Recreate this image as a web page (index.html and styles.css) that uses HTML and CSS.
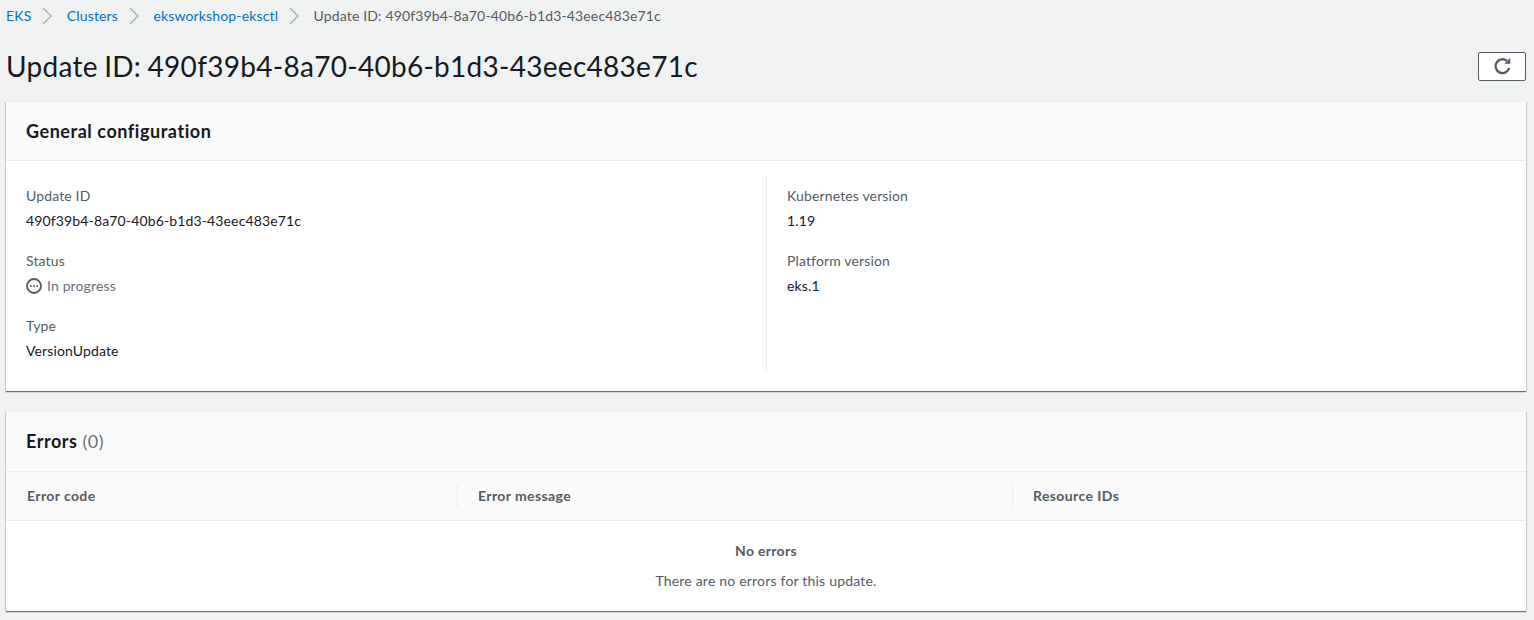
FILE: index.html
```html
<!DOCTYPE html>
<html lang="en">
<head>
<meta charset="utf-8">
<title>Update ID</title>
<link rel="stylesheet" href="styles.css">
</head>
<body>
<nav class="crumbs">
  <a href="#">EKS</a>
  <svg class="sep" width="10" height="18" viewBox="0 0 10 18"><path d="M1 1l8 8-8 8"/></svg>
  <a href="#">Clusters</a>
  <svg class="sep" width="10" height="18" viewBox="0 0 10 18"><path d="M1 1l8 8-8 8"/></svg>
  <a href="#">eksworkshop-eksctl</a>
  <svg class="sep" width="10" height="18" viewBox="0 0 10 18"><path d="M1 1l8 8-8 8"/></svg>
  <span class="current">Update ID: 490f39b4-8a70-40b6-b1d3-43eec483e71c</span>
</nav>
<header class="page-head">
  <h1>Update ID: 490f39b4-8a70-40b6-b1d3-43eec483e71c</h1>
  <button class="refresh" aria-label="Refresh">
    <svg width="19" height="19" viewBox="0 0 16 16"><path class="ring" d="M13.6 9.2A5.8 5.8 0 1 1 11.6 3.2"/><path class="head" d="M9.6 5.6h4.9V.7z"/></svg>
  </button>
</header>
<section class="card">
  <h2 class="card-title">General configuration</h2>
  <div class="columns">
    <div class="col">
      <div class="field"><div class="label">Update ID</div><div class="value">490f39b4-8a70-40b6-b1d3-43eec483e71c</div></div>
      <div class="field"><div class="label">Status</div><div class="value status">
        <svg width="16" height="16" viewBox="0 0 16 16"><circle class="ring" cx="8" cy="8" r="7"/><circle class="dot" cx="4.8" cy="8" r="1"/><circle class="dot" cx="8" cy="8" r="1"/><circle class="dot" cx="11.2" cy="8" r="1"/></svg>
        In progress</div></div>
      <div class="field"><div class="label">Type</div><div class="value">VersionUpdate</div></div>
    </div>
    <div class="col col-right">
      <div class="field"><div class="label">Kubernetes version</div><div class="value">1.19</div></div>
      <div class="field"><div class="label">Platform version</div><div class="value">eks.1</div></div>
    </div>
  </div>
</section>
<section class="card errors">
  <h2 class="card-title">Errors <span class="count">(0)</span></h2>
  <div class="thead">
    <div class="th th-code">Error code</div>
    <div class="th th-msg">Error message</div>
    <div class="th th-res">Resource IDs</div>
  </div>
  <div class="empty">
    <div class="empty-title">No errors</div>
    <div class="empty-text">There are no errors for this update.</div>
  </div>
</section>
</body>
</html>
```
FILE: styles.css
```css
* { box-sizing: border-box; }
html, body { margin: 0; height: 620px; overflow: hidden; }
body {
  background: #f0f2f2;
  padding: 0 8px 0 6px;
  font-family: "Lato", sans-serif;
  font-size: 14px;
  line-height: 20px;
  letter-spacing: .14px;
  color: #16191f;
}
.crumbs { display: flex; align-items: center; height: 32px; font-size: 14px; letter-spacing: .15px; }
.crumbs a { color: #0073bb; text-decoration: none; }
.sep { margin: 0 14.4px 0 11px; fill: none; stroke: #aab7b8; stroke-width: 1.6; }
.current { color: #545b64; }
.page-head { display: flex; justify-content: space-between; align-items: center; height: 69px; }
h1 { margin: 0 0 2px; font-size: 28px; line-height: 34px; font-weight: 400; letter-spacing: .28px; word-spacing: -1px; }
.refresh {
  width: 48px; height: 29px; margin-bottom: 1px; padding: 0;
  display: flex; align-items: center; justify-content: center;
  background: #fff; border: 1px solid #545b64; border-radius: 2px;
}
.refresh .ring { fill: none; stroke: #545b64; stroke-width: 2; }
.refresh .head { fill: #545b64; }
.card {
  background: #fff;
  border-top: 1px solid #eaeded;
  box-shadow: 0 1px 1px 0 rgba(0,28,36,.5), 1px 1px 1px 0 rgba(0,28,36,.1), -1px 1px 1px 0 rgba(0,28,36,.1);
}
.card-title {
  margin: 0; height: 59px; padding: 18px 20px;
  background: #fafafa; border-bottom: 1px solid #eaeded;
  font-size: 18px; line-height: 22px; font-weight: 700; letter-spacing: .55px;
}
.errors .card-title { height: 60px; }
.count { font-weight: 400; color: #687078; }
.columns { display: grid; grid-template-columns: 760px 1fr; padding: 15px 0 20px; }
.col { height: 195px; padding: 10px 20px 0; }
.col-right { border-left: 1px solid #eaeded; }
.field { height: 65px; }
.label { color: #545b64; line-height: 20px; }
.value { margin-top: 5px; line-height: 20px; }
.status { display: flex; align-items: center; gap: 5px; color: #687078; }
.status .ring { fill: none; stroke: #545b64; stroke-width: 1.8; }
.status .dot { fill: #545b64; }
.errors { margin-top: 20px; }
.thead { display: flex; height: 49px; align-items: center; background: #fafafa; border-bottom: 1px solid #eaeded; }
.th { height: 24px; line-height: 24px; padding-left: 20px; font-weight: 700; color: #545b64; letter-spacing: .4px; }
.th-code { width: 451px; padding-left: 21px; }
.th-msg { width: 555px; border-left: 1px solid #eaeded; }
.th-res { border-left: 1px solid #eaeded; }
.empty { height: 90px; padding-top: 20px; text-align: center; color: #545b64; }
.empty-title { font-weight: 700; letter-spacing: .3px; }
.empty-text { margin-top: 10px; letter-spacing: .2px; }
```
